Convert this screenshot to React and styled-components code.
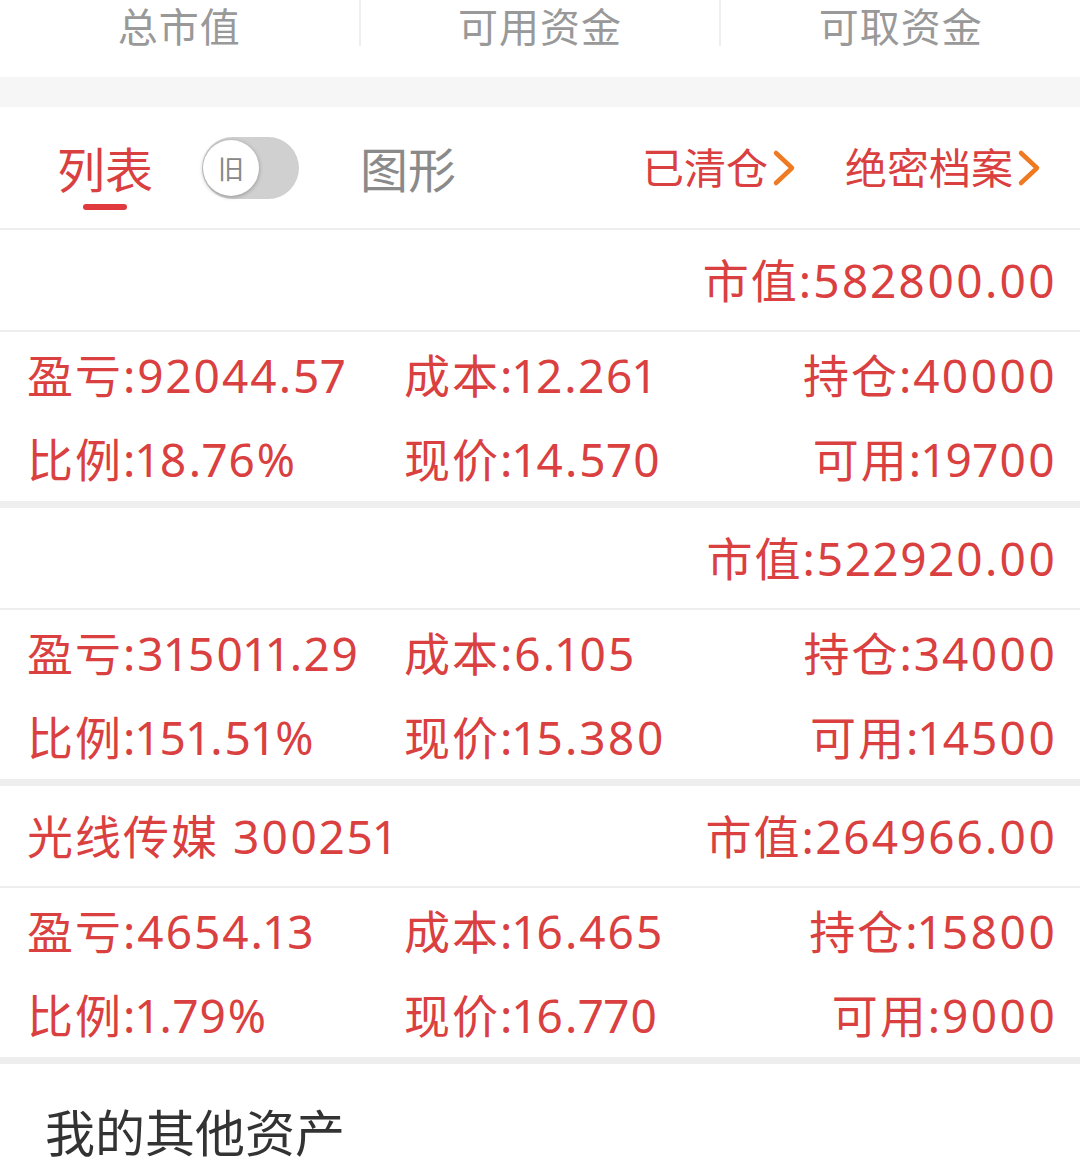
import React from 'react'
import styled, { createGlobalStyle } from 'styled-components'

const GlobalStyle = createGlobalStyle`
  body {
    margin: 0;
    background: #fff;
    font-family: "Noto Sans", "Noto Sans CJK SC", sans-serif;
  }
`

const Page = styled.div`
  width: 1080px;
  background: #fff;
`

const SummaryBar = styled.div`
  display: grid;
  grid-template-columns: 1fr 2px 1fr 2px 1fr;
  height: 77px;
`
const SummaryLabel = styled.div`
  font-size: 40px;
  line-height: 40px;
  color: #999;
  text-align: center;
  padding-top: 7px;
  letter-spacing: 1px;
`
const SummaryDivider = styled.div`
  height: 46px;
  background: #eee;
`
const Band = styled.div`
  height: 30px;
  background: #f6f6f6;
`

const TabRow = styled.div`
  display: flex;
  align-items: center;
  height: 121px;
  padding: 0 35px 0 57px;
  border-bottom: 2px solid #eee;
`
const Tab = styled.div`
  position: relative;
  font-size: 48px;
  line-height: 48px;
  color: ${({ active }) => (active ? '#d9403f' : '#8a8a8a')};
  margin-top: 4px;

  ${({ active }) =>
    active &&
    `
    &::after {
      content: '';
      position: absolute;
      left: 26px;
      width: 44px;
      bottom: -16px;
      height: 6px;
      border-radius: 3px;
      background: #e0393e;
    }
  `}
`
const Toggle = styled.div`
  display: flex;
  align-items: center;
  width: 97px;
  height: 62px;
  border-radius: 31px;
  background: #d0d0d0;
  margin: 0 61px 0 49px;
  padding-left: 1px;
  box-sizing: border-box;
`
const Knob = styled.div`
  width: 56px;
  height: 56px;
  border-radius: 50%;
  background: #fff;
  box-shadow: 0 1px 4px rgba(0, 0, 0, 0.3);
  display: flex;
  align-items: center;
  justify-content: center;
  font-size: 26px;
  color: #888;
`
const Spacer = styled.div`
  flex: 1;
`
const LinkItem = styled.div`
  display: flex;
  align-items: center;
  font-size: 42px;
  line-height: 42px;
  color: #d9403f;
  margin-left: ${({ gap }) => gap || 0}px;
`
const Chevron = styled.svg`
  width: 30px;
  height: 40px;
  margin-left: 2px;
`

const Card = styled.div`
  border-bottom: 7px solid #eeeeee;
`
const CardHead = styled.div`
  display: flex;
  justify-content: space-between;
  align-items: center;
  height: 100px;
  padding: 0 23px 0 27px;
  border-bottom: 2px solid #eee;
  font-size: 46px;
  line-height: 46px;
  letter-spacing: 2px;
  font-variant-numeric: proportional-nums;
  color: #d9403f;
`
const Details = styled.div`
  display: grid;
  grid-template-columns: 377px 1fr auto;
  grid-auto-rows: 84px;
  align-items: center;
  padding: 1px 23px 0 27px;
  height: 169px;
  box-sizing: border-box;
  font-size: 46px;
  line-height: 46px;
  letter-spacing: 2px;
  font-variant-numeric: proportional-nums;
  color: #d9403f;
`
const Cell = styled.div`
  text-align: ${({ right }) => (right ? 'right' : 'left')};
  white-space: nowrap;
`

const Footer = styled.div`
  padding: 42px 0 20px 45px;
  font-size: 50px;
  line-height: 54px;
  color: #333;
`

const positions = [
  {
    name: '',
    value: '582800.00',
    rows: [
      ['盈亏:92044.57', '成本:12.261', '持仓:40000'],
      ['比例:18.76%', '现价:14.570', '可用:19700']
    ]
  },
  {
    name: '',
    value: '522920.00',
    rows: [
      ['盈亏:315011.29', '成本:6.105', '持仓:34000'],
      ['比例:151.51%', '现价:15.380', '可用:14500']
    ]
  },
  {
    name: '光线传媒 300251',
    value: '264966.00',
    rows: [
      ['盈亏:4654.13', '成本:16.465', '持仓:15800'],
      ['比例:1.79%', '现价:16.770', '可用:9000']
    ]
  }
]

function Arrow() {
  return (
    <Chevron viewBox="0 0 30 40">
      <polyline
        points="6,5 22,20 6,35"
        fill="none"
        stroke="#f07a22"
        strokeWidth="4.5"
        strokeLinecap="round"
        strokeLinejoin="round"
      />
    </Chevron>
  )
}

export default function App() {
  return (
    <Page>
      <GlobalStyle />
      <SummaryBar>
        <SummaryLabel>总市值</SummaryLabel>
        <SummaryDivider />
        <SummaryLabel>可用资金</SummaryLabel>
        <SummaryDivider />
        <SummaryLabel>可取资金</SummaryLabel>
      </SummaryBar>
      <Band />

      <TabRow>
        <Tab active>列表</Tab>
        <Toggle>
          <Knob>旧</Knob>
        </Toggle>
        <Tab>图形</Tab>
        <Spacer />
        <LinkItem>
          已清仓
          <Arrow />
        </LinkItem>
        <LinkItem gap={45}>
          绝密档案
          <Arrow />
        </LinkItem>
      </TabRow>

      {positions.map((p, i) => (
        <Card key={i}>
          <CardHead>
            <span>{p.name}</span>
            <span>市值:{p.value}</span>
          </CardHead>
          <Details>
            {p.rows.map(row =>
              row.map((txt, j) => (
                <Cell key={txt} right={j === 2}>
                  {txt}
                </Cell>
              ))
            )}
          </Details>
        </Card>
      ))}

      <Footer>我的其他资产</Footer>
    </Page>
  )
}
